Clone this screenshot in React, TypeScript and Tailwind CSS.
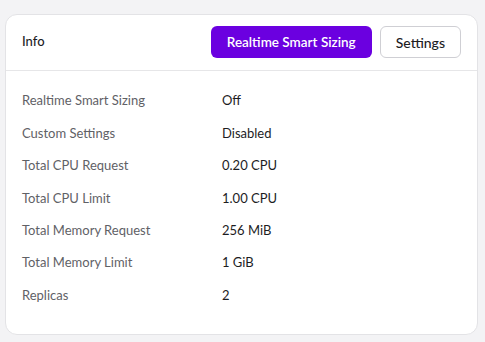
const rows = [
  { label: "Realtime Smart Sizing", value: "Off" },
  { label: "Custom Settings", value: "Disabled" },
  { label: "Total CPU Request", value: "0.20 CPU" },
  { label: "Total CPU Limit", value: "1.00 CPU" },
  { label: "Total Memory Request", value: "256 MiB" },
  { label: "Total Memory Limit", value: "1 GiB" },
  { label: "Replicas", value: "2" },
];

export default function App() {
  return (
    <div
      className="min-h-[342px] w-[485px] bg-[#f3f3f5] pl-[5px] pr-[7px] pt-[14px]"
      style={{ fontFamily: "Lato, 'Noto Sans', sans-serif" }}
    >
      <div className="rounded-[12px] border border-[#e3e3e6] bg-white">
        <div className="flex items-center justify-between border-b border-[#e6e6e8] pb-[12px] pl-[16px] pr-[16px] pt-[11px]">
          <span className="text-[13px] font-medium text-[#1d1d1f]">Info</span>
          <div className="flex items-center gap-2">
            <button className="h-[32px] rounded-[6px] bg-[#6b00e0] px-[16px] text-[13.5px] font-semibold text-white">
              Realtime Smart Sizing
            </button>
            <button className="h-[32px] rounded-[6px] border border-[#cfcfd4] bg-white px-[15px] text-[14px] font-medium text-[#1d1d1f]">
              Settings
            </button>
          </div>
        </div>
        <div className="px-[16px] pb-[22px] pt-[14px]">
          {rows.map((r) => (
            <div key={r.label} className="flex h-[32.4px] items-center text-[13px]">
              <span className="w-[200px] text-[#5f6166]">{r.label}</span>
              <span className="text-[#1d1d1f]">{r.value}</span>
            </div>
          ))}
        </div>
      </div>
    </div>
  );
}
